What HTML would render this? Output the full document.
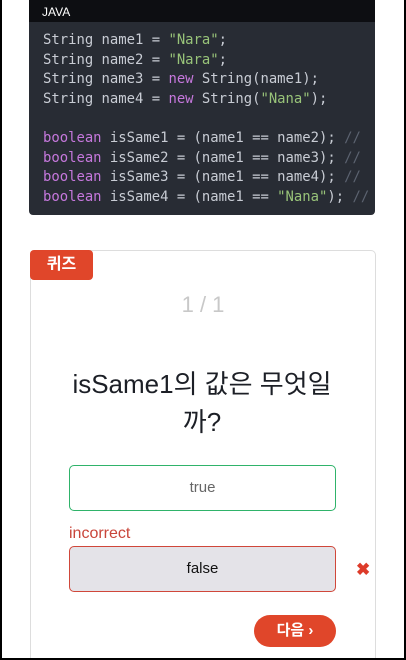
<!DOCTYPE html>
<html><head><meta charset="utf-8"><style>
*{margin:0;padding:0;box-sizing:border-box}
html,body{width:406px;height:660px;overflow:hidden;background:#fff}
body{position:relative;font-family:"Liberation Sans","Noto Sans CJK KR",sans-serif}
.frame{position:absolute;left:0;top:-2px;width:406px;height:662px;border:2px solid #000}
.code{position:absolute;left:29px;top:0;width:346px;height:215px;background:#282c34;border-radius:0 0 4px 4px;overflow:hidden}
.hd{height:22px;background:#0d0e12;color:#fff;font-size:12px;padding:5px 0 0 13px}
pre{font-family:"DejaVu Sans Mono","Liberation Mono",monospace;font-size:13.9px;line-height:19.6px;color:#c8ccd4;padding:9px 0 0 14px;white-space:pre;overflow:hidden}
.k{color:#c678dd}.s{color:#98c379}.c{color:#5c6370}
.card{position:absolute;left:30px;top:250px;width:346px;height:420px;border:1px solid #ddd;border-radius:5px}
.badge{position:absolute;left:30px;top:250px;width:63px;height:30px;background:#e0462a;color:#fff;font-weight:bold;font-size:16px;text-align:center;line-height:30px;border-radius:4px}
.num{position:absolute;left:0;width:406px;top:292px;text-align:center;color:#c8c8c8;font-size:22px}
.q{position:absolute;left:40px;width:324px;top:365px;text-align:center;color:#1c1f26;font-size:26px;line-height:38px}
.opt{position:absolute;left:69px;width:267px;height:46px;border-radius:5px;text-align:center;line-height:44px;font-size:15px}
.t{top:465px;border:1.5px solid #2fb36a;color:#666}
.f{top:546px;border:1.5px solid #d0473a;background:#e4e3e8;color:#111}
.inc{position:absolute;left:69px;top:525px;color:#c9453a;font-size:16px}
.x{position:absolute;left:356px;top:560px;color:#dd3b2a;font-size:17px;font-weight:bold}
.btn{position:absolute;left:254px;top:615px;width:82px;height:32px;border-radius:16px;background:#e0462a;color:#fff;font-weight:bold;font-size:15px;text-align:center;line-height:32px}
</style></head><body>
<div class="code"><div class="hd">JAVA</div><pre>String name1 = <span class="s">"Nara"</span>;
String name2 = <span class="s">"Nara"</span>;
String name3 = <span class="k">new</span> String(name1);
String name4 = <span class="k">new</span> String(<span class="s">"Nana"</span>);

<span class="k">boolean</span> isSame1 = (name1 == name2); <span class="c">//</span>
<span class="k">boolean</span> isSame2 = (name1 == name3); <span class="c">//</span>
<span class="k">boolean</span> isSame3 = (name1 == name4); <span class="c">//</span>
<span class="k">boolean</span> isSame4 = (name1 == <span class="s">"Nana"</span>); <span class="c">//</span></pre></div>
<div class="card"></div>
<div class="badge">퀴즈</div>
<div class="num">1 / 1</div>
<div class="q">isSame1의 값은 무엇일<br>까?</div>
<div class="opt t">true</div>
<div class="inc">incorrect</div>
<div class="opt f">false</div>
<div class="x">✖</div>
<div class="btn">다음 ›</div>
<div class="frame"></div>
</body></html>
